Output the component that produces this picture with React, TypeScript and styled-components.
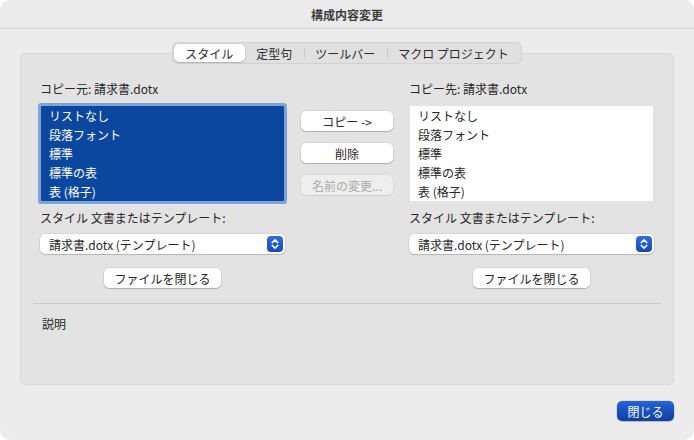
import styled, { createGlobalStyle } from 'styled-components';

const GlobalStyle = createGlobalStyle`
  html, body {
    margin: 0;
    padding: 0;
    background: #ffffff;
  }
  body {
    font-family: "Noto Sans CJK JP", "Noto Sans", "Liberation Sans", sans-serif;
    font-size: 12px;
    color: #262626;
  }
  * {
    box-sizing: border-box;
  }
`;

const Window = styled.div`
  width: 694px;
  height: 440px;
  background: #ececec;
  border-radius: 10px;
  overflow: hidden;
  display: flex;
  flex-direction: column;
`;

const TitleBar = styled.div`
  height: 29px;
  flex: none;
  display: flex;
  align-items: center;
  justify-content: center;
  background: #ebebeb;
  border-bottom: 1px solid #d4d4d4;
  font-size: 12px;
  font-weight: 700;
  color: #3f3f3f;
`;

const Body = styled.div`
  flex: 1;
  display: flex;
  flex-direction: column;
  padding: 13px 20px 0;
`;

const TabBar = styled.div`
  align-self: center;
  position: relative;
  z-index: 1;
  height: 22px;
  margin-bottom: -11px;
  display: flex;
  align-items: stretch;
  padding: 1px;
  background: #e0e0e0;
  border: 1px solid #d2d2d2;
  border-radius: 6px;
`;

const Tab = styled.div<{ $active?: boolean; $divider?: boolean }>`
  display: flex;
  align-items: center;
  padding: 0 11.5px;
  font-size: 12px;
  color: #2b2b2b;
  border-radius: 5px;
  position: relative;
  background: ${(p) => (p.$active ? '#ffffff' : 'transparent')};
  box-shadow: ${(p) =>
    p.$active ? '0 0 0 0.5px rgba(0,0,0,0.12), 0 1px 1px rgba(0,0,0,0.15)' : 'none'};
  &::before {
    content: '';
    display: ${(p) => (p.$divider ? 'block' : 'none')};
    position: absolute;
    left: 0;
    top: 4px;
    bottom: 4px;
    width: 1px;
    background: #c8c8c8;
  }
`;

const GroupBox = styled.div`
  height: 332px;
  background: #e3e3e3;
  border: 1px solid #d8d8d8;
  border-radius: 5px;
  padding: 27px 19px 0;
  display: flex;
  flex-direction: column;
`;

const Columns = styled.div`
  display: flex;
  gap: 16px;
`;

const Column = styled.div`
  width: 245px;
  display: flex;
  flex-direction: column;
`;

const MiddleColumn = styled.div`
  width: 92px;
  display: flex;
  flex-direction: column;
  padding-top: 30px;
  gap: 12px;
`;

const Label = styled.div`
  height: 16px;
  line-height: 16px;
  font-size: 12px;
  color: #262626;
`;

const List = styled.div<{ $selected?: boolean }>`
  margin: 9px 1px 0;
  width: 243px;
  height: 95px;
  background: ${(p) => (p.$selected ? '#0c479f' : '#ffffff')};
  color: ${(p) => (p.$selected ? '#ffffff' : '#262626')};
  box-shadow: ${(p) => (p.$selected ? '0 0 0 3px #7fa4d6' : 'none')};
  border-radius: ${(p) => (p.$selected ? '1px' : '0')};
`;

const ListRow = styled.div`
  height: 19px;
  line-height: 19px;
  padding-left: 8px;
  font-size: 12px;
`;

const SubLabel = styled(Label)`
  margin-top: 9px;
`;

const Select = styled.div`
  margin-top: 8px;
  height: 20px;
  background: #ffffff;
  border-radius: 5px;
  box-shadow: 0 0 0 0.5px rgba(0, 0, 0, 0.12), 0 1px 1px rgba(0, 0, 0, 0.15);
  display: flex;
  align-items: center;
  justify-content: space-between;
  padding: 0 2px 0 9px;
  font-size: 12px;
  color: #262626;
`;

const Stepper = styled.div`
  width: 16px;
  height: 16px;
  border-radius: 4px;
  background: linear-gradient(#2f6ee0, #1748b8);
  display: flex;
  align-items: center;
  justify-content: center;
`;

const Button = styled.div<{ $disabled?: boolean; $width?: number }>`
  align-self: center;
  width: ${(p) => (p.$width ? `${p.$width}px` : '100%')};
  height: 20px;
  border-radius: 5px;
  background: ${(p) => (p.$disabled ? '#eeeeee' : '#ffffff')};
  color: ${(p) => (p.$disabled ? '#a9a9a9' : '#262626')};
  box-shadow: ${(p) =>
    p.$disabled
      ? '0 0 0 0.5px rgba(0,0,0,0.08), 0 1px 1px rgba(0,0,0,0.06)'
      : '0 0 0 0.5px rgba(0,0,0,0.12), 0 1px 1px rgba(0,0,0,0.18)'};
  display: flex;
  align-items: center;
  justify-content: center;
  font-size: 12px;
`;

const FileButton = styled(Button)`
  margin-top: 14px;
`;

const Separator = styled.div`
  margin: 15px -7px 0;
  height: 1px;
  background: #cacaca;
`;

const Description = styled.div`
  margin-top: 12px;
  padding-left: 2px;
  height: 16px;
  line-height: 16px;
  font-size: 12px;
  color: #262626;
`;

const Footer = styled.div`
  display: flex;
  justify-content: flex-end;
  padding-top: 16px;
`;

const PrimaryButton = styled.div`
  width: 57px;
  height: 20px;
  border-radius: 5px;
  background: linear-gradient(#2563d6, #0d3fa6);
  box-shadow: 0 0 0 0.5px rgba(0, 0, 0, 0.15), 0 1px 1px rgba(0, 0, 0, 0.15);
  color: #ffffff;
  font-size: 12px;
  display: flex;
  align-items: center;
  justify-content: center;
`;

const styles = ['リストなし', '段落フォント', '標準', '標準の表', '表 (格子)'];

const StepperIcon = () => (
  <Stepper>
    <svg width="10" height="12" viewBox="0 0 10 12" fill="none">
      <path d="M2.2 4.6 L5 1.9 L7.8 4.6" stroke="#fff" strokeWidth="1.5" strokeLinecap="round" strokeLinejoin="round" />
      <path d="M2.2 7.4 L5 10.1 L7.8 7.4" stroke="#fff" strokeWidth="1.5" strokeLinecap="round" strokeLinejoin="round" />
    </svg>
  </Stepper>
);

const StylePane = ({ title, selected }: { title: string; selected?: boolean }) => (
  <Column>
    <Label>{title}</Label>
    <List $selected={selected}>
      {styles.map((s) => (
        <ListRow key={s}>{s}</ListRow>
      ))}
    </List>
    <SubLabel>スタイル 文書またはテンプレート:</SubLabel>
    <Select>
      <span>請求書.dotx (テンプレート)</span>
      <StepperIcon />
    </Select>
    <FileButton $width={117}>ファイルを閉じる</FileButton>
  </Column>
);

const App = () => {
  return (
    <>
      <GlobalStyle />
      <Window>
        <TitleBar>構成内容変更</TitleBar>
        <Body>
          <TabBar>
            <Tab $active>スタイル</Tab>
            <Tab>定型句</Tab>
            <Tab $divider>ツールバー</Tab>
            <Tab $divider>マクロ プロジェクト</Tab>
          </TabBar>
          <GroupBox>
            <Columns>
              <StylePane title="コピー元: 請求書.dotx" selected />
              <MiddleColumn>
                <Button>コピー -&gt;</Button>
                <Button>削除</Button>
                <Button $disabled>名前の変更...</Button>
              </MiddleColumn>
              <StylePane title="コピー先: 請求書.dotx" />
            </Columns>
            <Separator />
            <Description>説明</Description>
          </GroupBox>
          <Footer>
            <PrimaryButton>閉じる</PrimaryButton>
          </Footer>
        </Body>
      </Window>
    </>
  );
};

export default App;
